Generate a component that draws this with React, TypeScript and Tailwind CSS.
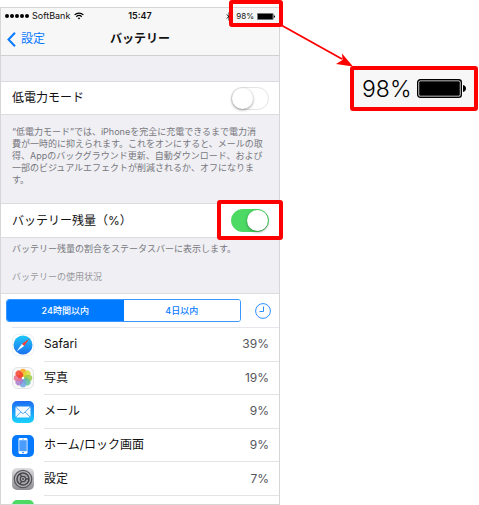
import { useState, type ReactNode } from "react";

function Frame({ className }: { className: string }) {
  return (
    <span
      aria-hidden="true"
      className={`pointer-events-none absolute z-10 rounded-[3px] border-4 border-[#ff0000] ${className}`}
    />
  );
}

function Battery({ className }: { className: string }) {
  return (
    <svg viewBox="0 0 49 19" className={className} aria-hidden="true">
      <rect x="0.7" y="0.7" width="43.6" height="17.6" rx="2.6" fill="#fff" stroke="#000" strokeWidth="1.4" />
      <rect x="2.2" y="2.2" width="40.6" height="14.6" rx="1" fill="#000" />
      <path d="M46 6c1.8.3 3 1.700 3 3.500s-1.200 3.200-3 3.500z" fill="#000" />
    </svg>
  );
}

function Toggle({ label, initial }: { label: string; initial: boolean }) {
  const [on, setOn] = useState(initial);
  return (
    <span className="relative block h-[23px] w-[38px]">
      <input
        type="checkbox"
        role="switch"
        aria-label={label}
        checked={on}
        onChange={() => setOn(!on)}
        className="peer block h-[23px] w-[38px] appearance-none rounded-full border border-[#e3e3e3] bg-white checked:border-[#4cd964] checked:bg-[#4cd964]"
      />
      <span className="pointer-events-none absolute top-px left-px size-[21px] rounded-full bg-white shadow-[0_1px_3px_rgba(0,0,0,0.4)] peer-checked:left-4" />
    </span>
  );
}

function SafariIcon() {
  return (
    <svg viewBox="0 0 22 22" className="size-[22px]">
      <defs>
        <linearGradient id="safari" x1="0" y1="0" x2="0" y2="1">
          <stop offset="0" stopColor="#1fc8fb" />
          <stop offset="1" stopColor="#1c6fee" />
        </linearGradient>
      </defs>
      <rect x="0.5" y="0.5" width="21" height="21" rx="5" fill="#fff" stroke="#f0f0f2" />
      <circle cx="11" cy="11" r="9.500" fill="url(#safari)" />
      <path d="M17.500 4.500 9.900 9.900l2.200 2.200z" fill="#ff3b30" />
      <path d="M4.500 17.500l5.400-7.600 2.200 2.200z" fill="#fff" />
    </svg>
  );
}

const petals = ["#f9a11b", "#ddd832", "#9ccb45", "#5fbf9d", "#6fa5e0", "#a77bcd", "#e56d8d", "#f7402a"];

function PhotosIcon() {
  return (
    <svg viewBox="0 0 22 22" className="size-[22px]">
      <rect x="0.5" y="0.5" width="21" height="21" rx="5" fill="#f8f8f8" stroke="#e3e3e6" />
      {petals.map((c, i) => (
        <rect
          key={c}
          x="7.900"
          y="1.700"
          width="6.200"
          height="8.300"
          rx="3.100"
          fill={c}
          fillOpacity=".85"
          transform={`rotate(${i * 45} 11 11)`}
        />
      ))}
      <circle cx="11" cy="11" r="1.200" fill="#fff" />
    </svg>
  );
}

function MailIcon() {
  return (
    <svg viewBox="0 0 22 22" className="size-[22px]">
      <defs>
        <linearGradient id="mail" x1="0" y1="0" x2="0" y2="1">
          <stop offset="0" stopColor="#1c6cf2" />
          <stop offset="1" stopColor="#1bd2fd" />
        </linearGradient>
      </defs>
      <rect width="22" height="22" rx="5" fill="url(#mail)" />
      <rect x="3.500" y="5.500" width="15" height="11" rx="1.400" fill="#f5faff" />
      <path d="M3.800 6l6.200 6c.6.500 1.400.500 2 0l6.200-6M3.800 16.200l5-5.200M18.200 16.200l-5-5.200" fill="none" stroke="#4ba2f5" strokeWidth=".9" />
    </svg>
  );
}

function HomeIcon() {
  return (
    <svg viewBox="0 0 22 22" className="size-[22px]">
      <rect width="22" height="22" rx="5" fill="#067aff" />
      <rect x="6.500" y="3" width="9" height="16" rx="1.400" fill="#fff" />
      <rect x="7.300" y="5.200" width="7.400" height="11" fill="#4b9dfb" />
      <circle cx="11" cy="17.600" r=".8" fill="#067aff" />
      <path d="M10 4.200h2" stroke="#067aff" strokeWidth=".5" />
    </svg>
  );
}

function GearIcon() {
  return (
    <svg viewBox="0 0 22 22" className="size-[22px]">
      <defs>
        <linearGradient id="gear" x1="0" y1="0" x2="0" y2="1">
          <stop offset="0" stopColor="#dcdde0" />
          <stop offset="1" stopColor="#8e8e93" />
        </linearGradient>
      </defs>
      <rect width="22" height="22" rx="5" fill="url(#gear)" />
      <circle cx="11" cy="11" r="8.700" fill="#b4b4b8" stroke="#58585b" strokeWidth="1.300" />
      <circle cx="11" cy="11" r="6" fill="#a9a9ad" stroke="#48484b" strokeWidth="1.600" />
      <circle cx="11" cy="11" r="2.700" fill="#b4b4b8" stroke="#48484b" strokeWidth="1.300" />
      <path d="M13.700 11H17M9.700 8.700 8 5.800M9.700 13.300 8 16.200" stroke="#48484b" strokeWidth="1.300" />
      <circle cx="11" cy="11" r="1" fill="#48484b" />
    </svg>
  );
}

const apps: { name: string; usage: string; icon: ReactNode }[] = [
  { name: "Safari", usage: "39%", icon: <SafariIcon /> },
  { name: "写真", usage: "19%", icon: <PhotosIcon /> },
  { name: "メール", usage: "9%", icon: <MailIcon /> },
  { name: "ホーム/ロック画面", usage: "9%", icon: <HomeIcon /> },
  { name: "設定", usage: "7%", icon: <GearIcon /> },
];

function StatusBar() {
  return (
    <div className="grid h-4 grid-cols-[1fr_auto_1fr] items-center pr-1 pl-1 text-[9px] leading-4">
      <div className="flex items-center gap-[3px]">
        <span className="flex gap-px">
          {[0, 1, 2, 3, 4].map((n) => (
            <span key={n} className="size-1 rounded-full bg-black" />
          ))}
        </span>
        <span>SoftBank</span>
        <svg viewBox="0 0 10 8" className="ml-px h-2 w-[10px]" fill="none" stroke="#000" strokeWidth="1.300" aria-hidden="true">
          <path d="M.6 2.900C3.100.5 6.900.5 9.400 2.900M2.300 4.700c1.500-1.400 3.900-1.400 5.400 0" />
          <path d="M3.700 6.100c.8-.7 1.800-.7 2.600 0L5 7.500z" fill="#000" stroke="none" />
        </svg>
      </div>
      <span className="font-semibold">15:47</span>
      <div className="flex items-center justify-end gap-1">
        <svg viewBox="0 0 6 9" className="h-[9px] w-[6px]" fill="none" stroke="#000" strokeWidth=".9" aria-hidden="true">
          <path d="M.8 2.500l4 4L3 8.300V.7l1.800 1.800-4 4" />
        </svg>
        <span className="relative flex h-4 items-center gap-[3px]">
          <span className="text-[8px]">98%</span>
          <Battery className="h-[7px] w-[18px]" />
          <Frame className="-top-2 -right-2 -bottom-[3px] -left-[7px]" />
        </span>
      </div>
    </div>
  );
}

function Phone() {
  const [range, setRange] = useState(0);
  return (
    <section className="w-[280px] shrink-0 border border-[#d6d6d8] bg-white">
      <header className="border-b border-[#cfcfd2] bg-[#f7f7f7]">
        <StatusBar />
        <div className="grid h-[31px] grid-cols-[1fr_auto_1fr] items-center px-[6px] pb-px">
          <button type="button" className="flex items-center gap-[5px] text-[12px] leading-4 text-[#087aff]">
            <svg viewBox="0 0 9 15" className="h-[15px] w-[9px]" fill="none" stroke="currentColor" strokeWidth="2" aria-hidden="true">
              <path d="M8 .8 1.500 7.500 8 14.200" />
            </svg>
            設定
          </button>
          <h1 className="text-[12px] leading-4 font-bold">バッテリー</h1>
        </div>
      </header>

      <div className="bg-[#efeff4] pt-[25px]">
        <div className="flex h-[34px] items-center justify-between border-y border-[#dcdce0] bg-white pr-[10px] pl-[11px]">
          <span className="text-[12px]">低電力モード</span>
          <Toggle label="低電力モード" initial={false} />
        </div>
        <p className="pt-[11px] pb-[17px] pl-[11px] text-[9px] leading-[12px] whitespace-nowrap text-[#77777c]">
          “低電力モード”では、iPhoneを完全に充電できるまで電力消
          <br />
          費が一時的に抑えられます。これをオンにすると、メールの取
          <br />
          得、Appのバックグラウンド更新、自動ダウンロード、および
          <br />
          一部のビジュアルエフェクトが削減されるか、オフになりま
          <br />
          す。
        </p>
        <div className="flex h-[35px] items-center justify-between border-y border-[#dcdce0] bg-white pr-[10px] pl-[11px]">
          <span className="text-[12px]">バッテリー残量（%）</span>
          <span className="relative">
            <Toggle label="バッテリー残量（%）" initial={true} />
            <Frame className="-top-[9px] -right-[14px] -bottom-2 -left-[14px]" />
          </span>
        </div>
        <p className="pt-[5px] pl-[11px] text-[9px] leading-[12px] text-[#77777c]">
          バッテリー残量の割合をステータスバーに表示します。
        </p>
        <h2 className="pt-4 pb-[10px] pl-[11px] text-[9px] leading-[12px] text-[#98989d]">バッテリーの使用状況</h2>
      </div>

      <div className="flex items-center gap-[14px] border-t border-[#dcdce0] py-[5px] pr-2 pl-[5px]">
        <div className="grid h-[23px] flex-1 grid-cols-2 overflow-hidden rounded-[3px] border border-[#3b96ff] text-[9px] font-medium">
          {["24時間以内", "4日以内"].map((label, i) => (
            <button
              key={label}
              type="button"
              aria-pressed={range === i}
              onClick={() => setRange(i)}
              className={range === i ? "bg-[#007aff] text-white" : "bg-white text-[#087aff]"}
            >
              {label}
            </button>
          ))}
        </div>
        <button type="button" aria-label="時間を表示">
          <svg viewBox="0 0 16 16" className="size-4" fill="none" stroke="#2b8dff" aria-hidden="true">
            <circle cx="8" cy="8" r="7.400" />
            <path d="M8.500 3.500v5h-4" />
          </svg>
        </button>
      </div>

      <div className="ml-[11px] h-px bg-[#e6e6ec]" />
      <ul className="grid h-[168px] grid-rows-5 pl-[11px]">
        {apps.map((app) => (
          <li key={app.name} className="flex items-stretch gap-[10px]">
            <span className="flex items-center" aria-hidden="true">
              {app.icon}
            </span>
            <span className="flex flex-1 items-center justify-between border-b border-[#e4e4e8] pr-[10px] text-[12px]">
              <span>{app.name}</span>
              <span className="text-[#55555a]">{app.usage}</span>
            </span>
          </li>
        ))}
      </ul>
      <div className="h-[8px] overflow-hidden pt-1 pl-[11px]" aria-hidden="true">
        <div className="size-[22px] rounded-[5px] bg-[#4cd964]" />
      </div>
    </section>
  );
}

export default function App() {
  return (
    <main className="relative flex items-start overflow-hidden bg-white pt-[7px] font-[Inter,'Noto_Sans_CJK_JP',sans-serif] text-[#111]">
      <Phone />
      <div className="ml-[70px] mt-[59px] flex h-[45px] w-[128px] items-center gap-[6px] rounded-[3px] border-4 border-[#ff0000] bg-[#f7f7f7] pl-2">
        <span className="text-[23px] leading-8 font-light text-black">98%</span>
        <Battery className="h-[19px] w-[49px]" />
      </div>
      <svg viewBox="0 0 75 45" className="absolute top-[24px] left-[280px] z-20 h-[45px] w-[75px]" aria-hidden="true">
        <path d="M1 1 62 35" stroke="#ff0000" strokeWidth="1.800" />
        <path d="M73 42.500 56 40l6.500-4L62 29.500z" fill="#ff0000" />
      </svg>
    </main>
  );
}
